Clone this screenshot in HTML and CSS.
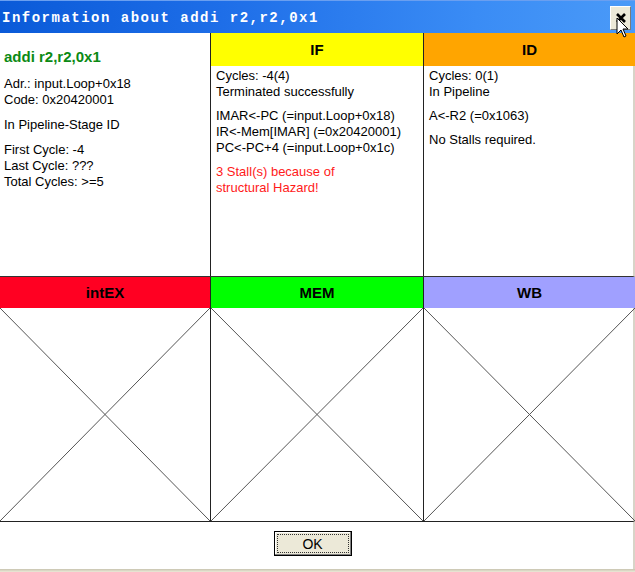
FILE: index.html
```html
<!DOCTYPE html>
<html>
<head>
<meta charset="utf-8">
<link rel="stylesheet" href="styles.css">
</head>
<body>
<div class="window">
  <div class="titlebar">
    <span class="title">Information about addi r2,r2,0x1</span>
    <span class="close"><svg width="14" height="12" viewBox="0 0 14 12"><path d="M3 2 L11 10 M11 2 L3 10" stroke="#000" stroke-width="2.6"/></svg></span>
    <svg class="cursor" width="14" height="22" viewBox="0 0 14 22"><path d="M1 1 L1 17 L5 13 L8 20 L10 19 L7 12 L12 12 Z" fill="#fff" stroke="#000" stroke-width="1"/></svg>
  </div>
  <div class="top">
    <div class="col col1">
      <div class="instr">addi r2,r2,0x1</div>
      <p>Adr.: input.Loop+0x18<br>Code: 0x20420001</p>
      <p>In Pipeline-Stage ID</p>
      <p>First Cycle: -4<br>Last Cycle: ???<br>Total Cycles: &gt;=5</p>
    </div>
    <div class="col col2">
      <div class="head if">IF</div>
      <div class="body">
        <p>Cycles: -4(4)<br>Terminated successfully</p>
        <p>IMAR&lt;-PC (=input.Loop+0x18)<br>IR&lt;-Mem[IMAR] (=0x20420001)<br>PC&lt;-PC+4 (=input.Loop+0x1c)</p>
        <p class="red">3 Stall(s) because of<br>structural Hazard!</p>
      </div>
    </div>
    <div class="col col3">
      <div class="head id">ID</div>
      <div class="body">
        <p>Cycles: 0(1)<br>In Pipeline</p>
        <p>A&lt;-R2 (=0x1063)</p>
        <p>No Stalls required.</p>
      </div>
    </div>
  </div>
  <div class="bottom">
    <div class="col col1">
      <div class="head2 ex">intEX</div>
      <svg class="cross" viewBox="0 0 100 100" preserveAspectRatio="none"><path d="M0 0 L100 100 M100 0 L0 100" stroke="#555" stroke-width="1" vector-effect="non-scaling-stroke"/></svg>
    </div>
    <div class="col col2">
      <div class="head2 mem">MEM</div>
      <svg class="cross" viewBox="0 0 100 100" preserveAspectRatio="none"><path d="M0 0 L100 100 M100 0 L0 100" stroke="#555" stroke-width="1" vector-effect="non-scaling-stroke"/></svg>
    </div>
    <div class="col col3">
      <div class="head2 wb">WB</div>
      <svg class="cross" viewBox="0 0 100 100" preserveAspectRatio="none"><path d="M0 0 L100 100 M100 0 L0 100" stroke="#555" stroke-width="1" vector-effect="non-scaling-stroke"/></svg>
    </div>
  </div>
  <div class="footer">
    <button class="ok"><span class="focus">OK</span></button>
  </div>
  <div class="frame-bottom"></div>
</div>
</body>
</html>
```

FILE: styles.css
```css
html, body {
  margin: 0;
  padding: 0;
  background: #fff;
}
.window {
  width: 635px;
  height: 572px;
  display: flex;
  flex-direction: column;
  font-family: "Liberation Sans", Arial, sans-serif;
  font-size: 13px;
  color: #000;
  overflow: hidden;
}
.titlebar {
  position: relative;
  height: 33px;
  box-sizing: border-box;
  border-top: 1px solid #6a9ff0;
  background: linear-gradient(to right, #0a5ad8 0%, #1e6ee8 35%, #3a8cf5 75%, #4a9af8 100%);
  display: flex;
  align-items: center;
  justify-content: space-between;
  padding: 0 4px 0 2px;
}
.title {
  font-family: "Liberation Mono", "DejaVu Sans Mono", monospace;
  font-weight: bold;
  font-size: 14px;
  letter-spacing: 1.5px;
  color: #fff;
  margin-top: 2px;
}
.close {
  width: 21px;
  height: 24px;
  box-sizing: border-box;
  background: #ece9d8;
  border: 1px solid #fff;
  border-right-color: #7a7a7a;
  border-bottom-color: #7a7a7a;
  display: flex;
  align-items: center;
  justify-content: center;
  margin-top: 1px;
}
.cursor {
  position: absolute;
  left: 616px;
  top: 16px;
  z-index: 2;
}
.top {
  display: grid;
  grid-template-columns: 210px 213px 212px;
  height: 243px;
  border-right: 2px solid #d8d4c8;
}
.bottom {
  display: grid;
  grid-template-columns: 210px 213px 212px;
  height: 244px;
  border-top: 1px solid #333;
  border-bottom: 1px solid #222;
  border-right: 2px solid #d8d4c8;
}
.col {
  display: flex;
  flex-direction: column;
  min-width: 0;
}
.col2, .col3 {
  border-left: 1px solid #222;
}
.top .col1 {
  padding: 14px 0 0 4px;
}
.instr {
  color: #0b8a14;
  font-weight: bold;
  font-size: 15px;
  line-height: 20px;
  margin-bottom: 9px;
}
p {
  margin: 0 0 8px 0;
  line-height: 16px;
}
.col1 p {
  margin-bottom: 9px;
}
.red {
  color: #ff1a1a;
}
.head {
  height: 33px;
  display: flex;
  align-items: center;
  justify-content: center;
  font-weight: bold;
  font-size: 15px;
}
.body {
  padding: 2px 0 0 5px;
}
.if { background: #ffff00; }
.id { background: #ffa500; }
.head2 {
  height: 31px;
  display: flex;
  align-items: center;
  justify-content: center;
  font-weight: bold;
  font-size: 15px;
}
.ex { background: #ff0022; }
.mem { background: #00ff00; }
.wb { background: #a0a0ff; }
.cross {
  display: block;
  width: 100%;
  flex: 1;
}
.footer {
  flex: 1;
  display: flex;
  justify-content: center;
  align-items: flex-start;
  padding-top: 9px;
  padding-right: 8px;
  border-right: 2px solid #d8d4c8;
}
.ok {
  width: 78px;
  height: 25px;
  padding: 2px;
  box-sizing: border-box;
  background: #ece9d8;
  border: 1px solid #000;
  box-shadow: inset -1px -1px 0 #808080, inset 1px 1px 0 #fff;
  font-family: "Liberation Sans", Arial, sans-serif;
  font-size: 14px;
  display: flex;
}
.focus {
  flex: 1;
  border: 1px dotted #333;
  display: flex;
  align-items: center;
  justify-content: center;
  line-height: 1;
}
.frame-bottom {
  height: 3px;
  background: linear-gradient(to bottom, #c8c4b0, #ece9d8);
}
```
